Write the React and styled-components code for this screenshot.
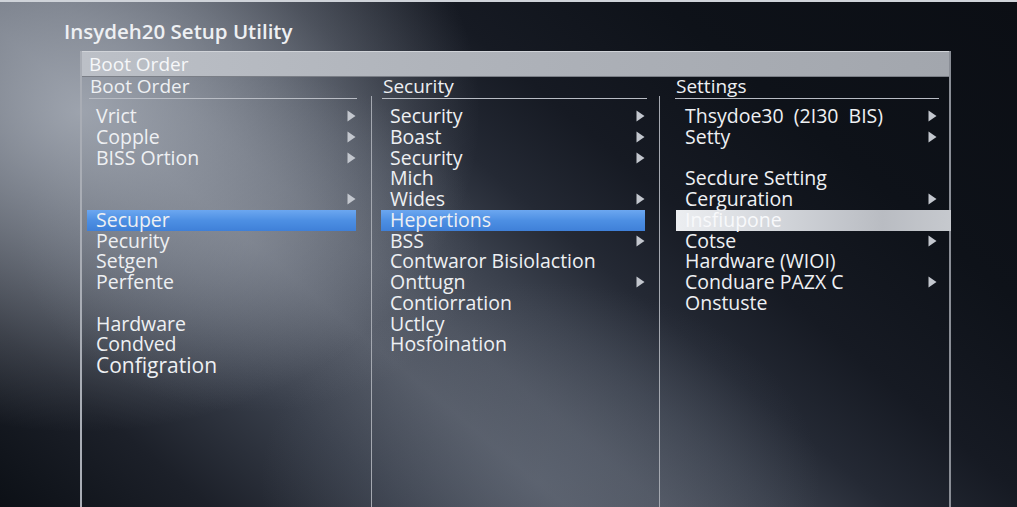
import React from "react";
import styled, { createGlobalStyle } from "styled-components";

const Global = createGlobalStyle`
  html, body { margin: 0; padding: 0; background: #0b0e14; }
  #root { width: 1017px; height: 507px; }
`;

const Screen = styled.div`
  box-sizing: border-box;
  width: 1017px;
  height: 507px;
  overflow: hidden;
  display: flex;
  flex-direction: column;
  padding: 17px 0 0 64px;
  border-top: 2px solid #cfd3d9;
  font-family: "Open Sans", "Noto Sans", sans-serif;
  color: #eef0f3;
  background:
    radial-gradient(ellipse 400px 320px at 80px 110px, rgba(170, 176, 186, 0.85), rgba(170, 176, 186, 0) 100%),
    radial-gradient(ellipse 230px 170px at 250px 240px, rgba(128, 134, 146, 0.45), rgba(128, 134, 146, 0) 100%),
    radial-gradient(ellipse 280px 200px at 540px 480px, rgba(100, 108, 122, 0.45), rgba(100, 108, 122, 0) 100%),
    linear-gradient(40deg, #0c1016 0%, #1c2029 13%, #383e4a 25%, #555b67 35%, #4e5460 41%, #3a404c 48%, #242934 55%, #161a23 64%, #0e1219 78%, #0b0e14 100%);
  background-color: #0b0e14;
`;

const Title = styled.h1`
  margin: 0 0 8px 0;
  font-size: 20.5px;
  font-weight: 600;
  line-height: 24px;
  color: #eef0f3;
`;

const Panel = styled.div`
  box-sizing: border-box;
  margin-left: 16px;
  width: 871px;
  flex: 1;
  display: flex;
  flex-direction: column;
  border-left: 2px solid #a9adb5;
  border-right: 2px solid #8a8e96;
`;

const Bar = styled.div`
  height: 26px;
  box-sizing: border-box;
  padding-left: 7px;
  font-size: 19px;
  line-height: 24px;
  color: #f6f7f9;
  background: linear-gradient(to right, #bcc0c7 0%, #b0b4bb 40%, #a2a6ad 100%);
  border-top: 1px solid #d0d3d8;
  border-bottom: 1px solid #7a7e86;
`;

const Columns = styled.div`
  flex: 1;
  display: grid;
  grid-template-columns: 289px 288px 290px;
`;

const Column = styled.div`
  display: flex;
  flex-direction: column;
`;

const Heading = styled.div`
  margin: 0 ${(p) => p.$hr}px 0 ${(p) => p.$hl}px;
  height: 21px;
  font-size: 19px;
  line-height: 19px;
  color: #eef0f3;
  border-bottom: 1.5px solid #b8bcc4;
  padding-left: 1px;
`;

const Body = styled.div`
  flex: 1;
  border-left: ${(p) => (p.$sep ? "1.5px solid #a4a8b0" : "none")};
  margin-top: ${(p) => (p.$sep ? "-3px" : "0")};
  padding-top: ${(p) => (p.$sep ? "10px" : "7px")};
`;

const Row = styled.div`
  height: 20.75px;
  margin: 0 ${(p) => p.$mr}px 0 ${(p) => p.$ml}px;
  padding: 0 ${(p) => p.$pr}px 0 9px;
  display: flex;
  align-items: center;
  justify-content: space-between;
  font-size: ${(p) => (p.$big ? 21 : 19.5)}px;
  white-space: pre;
  color: #eef0f3;
  background: ${(p) =>
    p.$sel === "blue"
      ? "linear-gradient(to bottom, #6ca7f0 0%, #4d8fe3 50%, #3f80d8 100%)"
      : p.$sel === "gray"
      ? "linear-gradient(to right, #eceef1 0%, #d4d7dc 35%, #b9bcc2 75%, #c6c9ce 100%)"
      : "transparent"};
`;

const Label = styled.span`
  display: block;
  height: 20.75px;
  line-height: 20.75px;
  color: ${(p) => (p.$dim ? "#f8f9fb" : "#eef0f3")};
`;

const Arrow = () => (
  <svg width="9" height="12" viewBox="0 0 9 12" aria-hidden="true">
    <path d="M0.5 0.5 L8.5 6 L0.5 11.5 Z" fill="#c3c7ce" />
  </svg>
);

const cols = [
  {
    head: "Boot Order",
    hl: 7,
    hr: 14,
    ml: 5,
    mr: 15,
    pr: 0,
    sep: false,
    rows: [
      { t: "Vrict", a: 1 },
      { t: "Copple", a: 1 },
      { t: "BISS Ortion", a: 1 },
      { t: "" },
      { t: "", a: 1 },
      { t: "Secuper", sel: "blue" },
      { t: "Pecurity" },
      { t: "Setgen" },
      { t: "Perfente" },
      { t: "" },
      { t: "Hardware" },
      { t: "Condved" },
      { t: "Configration", big: 1 },
    ],
  },
  {
    head: "Security",
    hl: 11,
    hr: 12,
    ml: 9,
    mr: 14,
    pr: 0,
    sep: true,
    rows: [
      { t: "Security", a: 1 },
      { t: "Boast", a: 1 },
      { t: "Security", a: 1 },
      { t: "Mich" },
      { t: "Wides", a: 1 },
      { t: "Hepertions", sel: "blue" },
      { t: "BSS", a: 1 },
      { t: "Contwaror Bisiolaction" },
      { t: "Onttugn", a: 1 },
      { t: "Contiorration" },
      { t: "Uctlcy" },
      { t: "Hosfoination" },
    ],
  },
  {
    head: "Settings",
    hl: 16,
    hr: 10,
    ml: 16,
    mr: -2,
    pr: 14,
    sep: true,
    rows: [
      { t: "Thsydoe30  (2I30  BIS)", a: 1 },
      { t: "Setty", a: 1 },
      { t: "" },
      { t: "Secdure Setting" },
      { t: "Cerguration", a: 1 },
      { t: "Insfiupone", sel: "gray" },
      { t: "Cotse", a: 1 },
      { t: "Hardware (WIOI)" },
      { t: "Conduare PAZX C", a: 1 },
      { t: "Onstuste" },
    ],
  },
];

export default function App() {
  return (
    <>
      <Global />
      <Screen>
        <Title>Insydeh20 Setup Utility</Title>
        <Panel>
          <Bar>Boot Order</Bar>
          <Columns>
            {cols.map((c) => (
              <Column key={c.head}>
                <Heading $hl={c.hl} $hr={c.hr}>
                  {c.head}
                </Heading>
                <Body $sep={c.sep}>
                  {c.rows.map((r, i) => (
                    <Row
                      key={i}
                      $ml={c.ml}
                      $mr={c.mr}
                      $pr={c.pr}
                      $sel={r.sel}
                      $big={r.big}
                    >
                      <Label $dim={r.sel === "gray"}>{r.t}</Label>
                      {r.a ? <Arrow /> : null}
                    </Row>
                  ))}
                </Body>
              </Column>
            ))}
          </Columns>
        </Panel>
      </Screen>
    </>
  );
}
